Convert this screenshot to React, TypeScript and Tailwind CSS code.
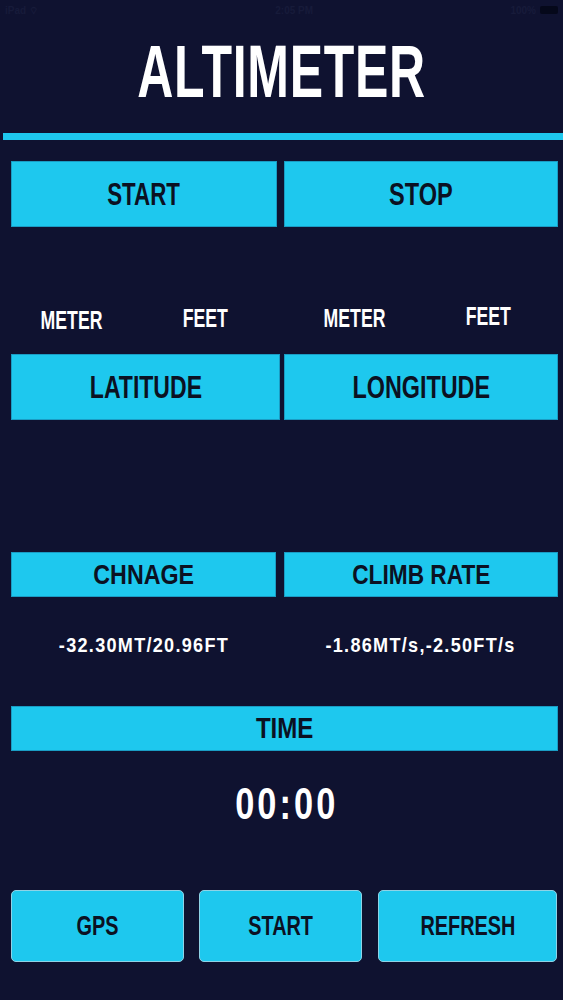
import React from "react";

const Cond = ({ children, className }: { children: React.ReactNode; className: string }) => (
  <span className={"inline-block whitespace-nowrap leading-none font-bold " + className}>{children}</span>
);

export default function App() {
  return (
    <div className="w-[563px] h-[1000px] bg-[#0f1230] flex flex-col font-['Liberation_Sans',Arial,sans-serif] overflow-hidden">
      {/* status bar */}
      <div className="h-[20px] flex items-center justify-between px-[5px] text-[10px] text-[#171b3a] font-semibold">
        <span>iPad ⌔</span>
        <span className="ml-[40px]">2:05 PM</span>
        <span className="flex items-center gap-[4px]">
          100%
          <span className="w-[18px] h-[8px] rounded-[2px] bg-[#05081a]" />
        </span>
      </div>

      {/* title */}
      <div className="mt-[15px] h-[74px] flex justify-center">
        <Cond className="text-[74px] text-white scale-x-[0.676] tracking-[1px]">ALTIMETER</Cond>
      </div>

      {/* divider */}
      <div className="mt-[24px] ml-[3px] h-[7px] bg-[#1ec8ee]" />

      {/* start / stop */}
      <div className="mt-[21px] pl-[11px] grid grid-cols-[266px_274px] gap-[7px] h-[66px]">
        <div className="bg-[#1ec8ee] border border-[#1a9cc4] flex items-center justify-center">
          <Cond className="text-[31px] text-[#0b1122] scale-x-[0.72]">START</Cond>
        </div>
        <div className="bg-[#1ec8ee] border border-[#1a9cc4] flex items-center justify-center">
          <Cond className="text-[31px] text-[#0b1122] scale-x-[0.76]">STOP</Cond>
        </div>
      </div>

      {/* unit labels */}
      <div className="mt-[73px] h-[36px] pl-[11px] grid grid-cols-[266px_274px] gap-[7px]">
        <div className="-ml-[7px] grid grid-cols-[134px_134px] items-center">
          <div className="flex justify-center pt-[4px]">
            <Cond className="text-[26px] text-white scale-x-[0.68]">METER</Cond>
          </div>
          <div className="flex justify-center">
            <Cond className="text-[26px] text-white scale-x-[0.68]">FEET</Cond>
          </div>
        </div>
        <div className="ml-[3px] grid grid-cols-[134px_134px] items-center">
          <div className="flex justify-center">
            <Cond className="text-[26px] text-white scale-x-[0.68]">METER</Cond>
          </div>
          <div className="flex justify-center pb-[4px]">
            <Cond className="text-[26px] text-white scale-x-[0.68]">FEET</Cond>
          </div>
        </div>
      </div>

      {/* latitude / longitude */}
      <div className="mt-[18px] pl-[11px] grid grid-cols-[269px_274px] gap-[4px] h-[66px]">
        <div className="bg-[#1ec8ee] border border-[#1a9cc4] flex items-center justify-center">
          <Cond className="text-[32px] text-[#0b1122] scale-x-[0.72]">LATITUDE</Cond>
        </div>
        <div className="bg-[#1ec8ee] border border-[#1a9cc4] flex items-center justify-center">
          <Cond className="text-[32px] text-[#0b1122] scale-x-[0.73]">LONGITUDE</Cond>
        </div>
      </div>

      {/* change / climb rate */}
      <div className="mt-[132px] pl-[11px] grid grid-cols-[265px_274px] gap-[8px] h-[45px]">
        <div className="bg-[#1ec8ee] border border-[#1a9cc4] flex items-center justify-center">
          <Cond className="text-[28px] text-[#0b1122] scale-x-[0.83]">CHNAGE</Cond>
        </div>
        <div className="bg-[#1ec8ee] border border-[#1a9cc4] flex items-center justify-center">
          <Cond className="text-[28px] text-[#0b1122] scale-x-[0.81]">CLIMB RATE</Cond>
        </div>
      </div>

      {/* values */}
      <div className="mt-[29px] h-[36px] pl-[11px] grid grid-cols-[265px_274px] gap-[8px] items-center">
        <div className="flex justify-center">
          <Cond className="text-[21px] text-white scale-x-[0.86] tracking-[1.5px]">-32.30MT/20.96FT</Cond>
        </div>
        <div className="flex justify-center">
          <Cond className="text-[21px] text-white scale-x-[0.86] tracking-[1.5px]">-1.86MT/s,-2.50FT/s</Cond>
        </div>
      </div>

      {/* time */}
      <div className="mt-[44px] ml-[11px] mr-[5px] h-[45px] bg-[#1ec8ee] border border-[#1a9cc4] flex items-center justify-center">
        <Cond className="text-[29px] text-[#0b1122] scale-x-[0.83]">TIME</Cond>
      </div>

      <div className="mt-[29px] h-[48px] flex items-center justify-center">
        <span className="ml-[8px] inline-block leading-none text-[44px] font-bold text-white scale-x-[0.78] tracking-[4px] pl-[4px]">
          00:00
        </span>
      </div>

      {/* bottom buttons */}
      <div className="mt-[62px] pl-[11px] grid grid-cols-[173px_163px_180px] gap-x-[15px] h-[72px]">
        <div className="bg-[#1ec8ee] border border-[#8fd3e6] rounded-[5px] flex items-center justify-center">
          <Cond className="text-[28px] text-[#0b1122] scale-x-[0.71]">GPS</Cond>
        </div>
        <div className="bg-[#1ec8ee] border border-[#8fd3e6] rounded-[5px] flex items-center justify-center">
          <Cond className="text-[28px] text-[#0b1122] scale-x-[0.71]">START</Cond>
        </div>
        <div className="ml-[1px] bg-[#1ec8ee] border border-[#8fd3e6] rounded-[5px] flex items-center justify-center">
          <Cond className="text-[28px] text-[#0b1122] scale-x-[0.71]">REFRESH</Cond>
        </div>
      </div>
    </div>
  );
}
